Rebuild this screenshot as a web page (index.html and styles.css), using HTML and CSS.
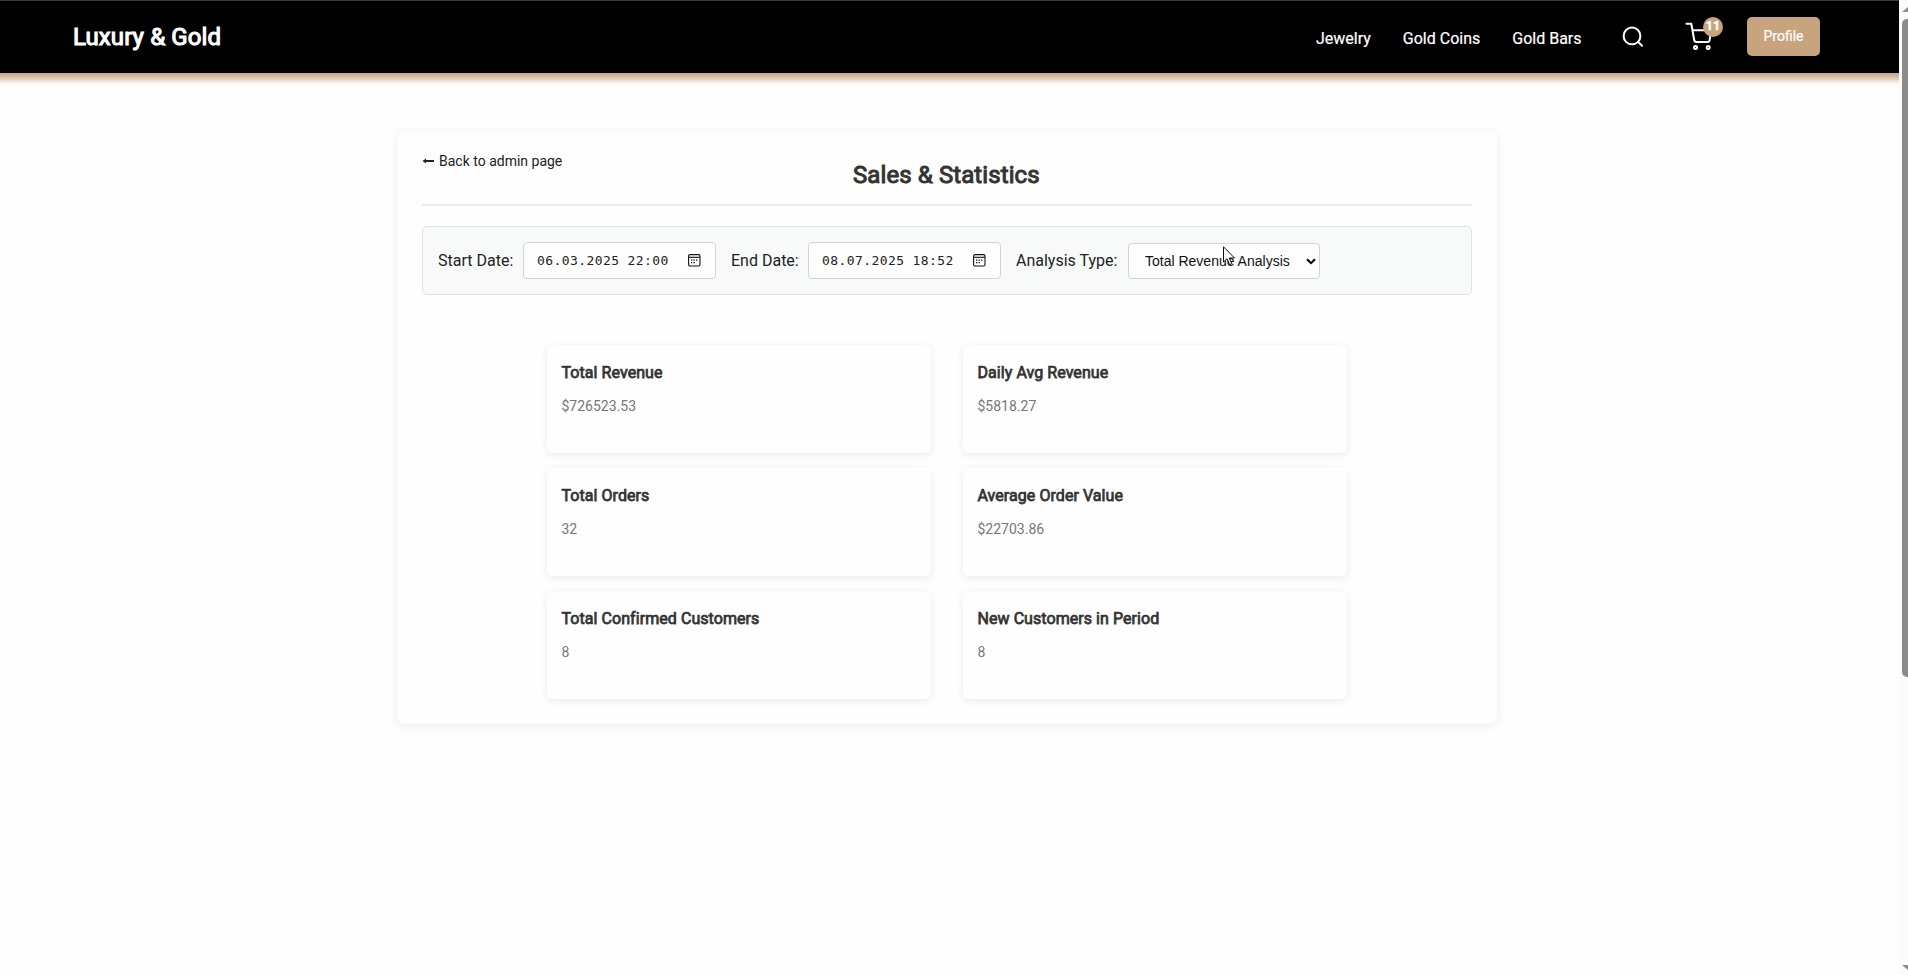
FILE: index.html
```html
<!DOCTYPE html>
<html lang="en">
<head>
<meta charset="utf-8">
<title>Luxury &amp; Gold</title>
<link rel="stylesheet" href="styles.css">
</head>
<body>
<div class="app">
  <div class="page">
    <header class="header">
      <a class="brand"><span>Luxury &amp; Gold</span></a>
      <nav class="nav">
        <a class="nav-link"><span>Jewelry</span></a>
        <a class="nav-link"><span>Gold Coins</span></a>
        <a class="nav-link"><span>Gold Bars</span></a>
      </nav>
      <svg class="search" viewBox="0 0 24 24" width="24" height="24"><circle cx="10" cy="9.900" r="8.400"/><path d="M16.200 16 20 19.700"/></svg>
      <div class="cart">
        <svg viewBox="0 0 30 30" width="30" height="30"><path d="M1.500 1.700h4.800L9.200 18c.2 1.300 1 1.900 2.200 1.900h11c1.200 0 2-.6 2.200-1.700L26 8.300H7.600"/><circle cx="10.500" cy="25.600" r="1.500"/><circle cx="23.200" cy="25.600" r="1.500"/></svg>
        <span class="badge">11</span>
      </div>
      <a class="profile"><span>Profile</span></a>
    </header>
    <main class="panel">
      <div class="panel-head">
        <a class="back"><svg viewBox="0 0 12 8" width="12" height="8"><path d="M.5 4 4 1.500V3h8v2H4v1.500z"/></svg><span>Back to admin page</span></a>
        <h1 class="title"><span>Sales &amp; Statistics</span></h1>
      </div>
      <div class="filters">
        <label class="label label-start">Start Date:</label>
        <div class="date"><span>06.03.2025 22:00</span><svg viewBox="0 0 13 13" width="13" height="13"><rect class="line" x=".6" y=".6" width="11.400" height="11.400" rx="1.400"/><path class="line" d="M1 3.300h11"/><path d="M5.500 5.500h1.300v1.300H5.500zM8 5.500h1.300v1.300H8zM3 8h1.300v1.300H3zM5.500 8h1.300v1.300H5.500zM3 5.500h1.300v1.300H3z"/></svg></div>
        <label class="label label-end">End Date:</label>
        <div class="date"><span>08.07.2025 18:52</span><svg viewBox="0 0 13 13" width="13" height="13"><rect class="line" x=".6" y=".6" width="11.400" height="11.400" rx="1.400"/><path class="line" d="M1 3.300h11"/><path d="M5.500 5.500h1.300v1.300H5.500zM8 5.500h1.300v1.300H8zM3 8h1.300v1.300H3zM5.500 8h1.300v1.300H5.500zM3 5.500h1.300v1.300H3z"/></svg></div>
        <label class="label label-type">Analysis Type:</label>
        <div class="select"><span>Total Revenue Analysis</span><svg viewBox="0 0 10 7" width="10" height="7"><path d="M1 1.200 5 5.200 9 1.200"/></svg></div>
      </div>
      <section class="stats">
        <article class="stat"><h2><span>Total Revenue</span></h2><p><span>$726523.53</span></p></article>
        <article class="stat"><h2><span>Daily Avg Revenue</span></h2><p><span>$5818.27</span></p></article>
        <article class="stat"><h2><span>Total Orders</span></h2><p><span>32</span></p></article>
        <article class="stat"><h2><span>Average Order Value</span></h2><p><span>$22703.86</span></p></article>
        <article class="stat"><h2><span>Total Confirmed Customers</span></h2><p><span>8</span></p></article>
        <article class="stat"><h2><span>New Customers in Period</span></h2><p><span>8</span></p></article>
      </section>
    </main>
  </div>
  <div class="scrollbar"><i class="arrow up"></i><i class="thumb"></i><i class="arrow down"></i></div>
  <svg class="cursor" viewBox="0 0 13 20" width="13" height="20"><path d="M.5.800V16l3.500-3.300 2.600 6 2.300-1-2.600-5.700h5.200z"/></svg>
</div>
</body>
</html>
```
FILE: styles.css
```css
* { box-sizing: border-box; }
body { margin: 0; background: #fefefe; font-family: Roboto, "Liberation Sans", sans-serif; font-size: 16px; color: #222; overflow: hidden; }
h1, h2, p { margin: 0; font-weight: 400; }
.app { position: relative; display: flex; height: 975px; }
.page { width: 1899px; }
.header { display: flex; align-items: flex-start; height: 73px; padding-left: 73px; background: #000; border-top: 1px solid #3b3b3b; box-shadow: 0 -1px 7px 7px #c8a47e; color: #fff; line-height: 20px; }
.brand { width: 1243px; padding-top: 26px; font-size: 24px; letter-spacing: .1px; -webkit-text-stroke: 1.1px #fff; }
.nav { display: flex; gap: 32px; width: 306px; padding-top: 28px; }
.nav-link { white-space: nowrap; -webkit-text-stroke: .2px #fff; }
.search { margin: 25px 0 0; fill: none; stroke: #fff; stroke-width: 2; stroke-linecap: round; }
.cart { position: relative; margin: 21px 0 0 39px; width: 30px; height: 30px; }
.cart svg { display: block; fill: none; stroke: #fff; stroke-width: 2; stroke-linecap: round; stroke-linejoin: round; }
.badge { position: absolute; left: 18px; top: -5px; width: 20px; height: 20px; border-radius: 50%; background: #c8a47e; font-size: 12.500px; font-weight: 700; text-align: center; line-height: 18px; -webkit-text-stroke: .4px #fff; }
.profile { margin: 16px 0 0 32px; width: 73px; height: 39px; border-radius: 5px; background: #c8a47e; font-size: 14px; line-height: 38px; text-align: center; -webkit-text-stroke: .2px #fff; }

.panel { width: 1100px; height: 593px; margin: 58px 0 0 397px; padding: 20px 25px 25px; border-radius: 8px; background: #fefefe; box-shadow: 0 2px 10px rgba(0, 0, 0, .08); }
.panel-head { display: flex; height: 55px; border-bottom: 2px solid #eaeaea; }
.back { display: flex; align-items: center; gap: 5px; width: 431px; height: 20px; font-size: 14px; }
.back svg { fill: #222; }
.title { padding-top: 9px; font-size: 24px; line-height: 30px; letter-spacing: .1px; color: #333; -webkit-text-stroke: 1px #333; white-space: nowrap; }
.filters { display: flex; align-items: center; height: 69px; margin-top: 20px; padding: 0 15px; border: 1px solid #dee2e6; border-radius: 5px; background: #f8faf9; }
.label { color: #222; white-space: nowrap; }
.label-start { width: 85px; }
.label-end { width: 92px; padding-left: 15px; }
.label-type { width: 127px; padding-left: 15px; }
.date { display: flex; align-items: center; justify-content: space-between; width: 193px; height: 37px; padding: 0 14px 0 13px; border: 1px solid #ced4da; border-radius: 4px; background: #fefefe; font: 13px/18px "DejaVu Sans Mono", monospace; letter-spacing: .41px; color: #222; white-space: pre; }
.date svg { fill: #111; }
.date .line { fill: none; stroke: #111; stroke-width: 1.100; }
.select { display: flex; align-items: center; justify-content: space-between; width: 192px; height: 36px; margin-top: 1px; padding: 0 3px 0 16px; border: 1px solid #ced4da; border-radius: 4px; background: #fefefe; font: 14px/18px "Liberation Sans", Arial, sans-serif; color: #111; white-space: nowrap; }
.select svg { fill: none; stroke: #000; stroke-width: 2; }

.stats { display: grid; grid-template-columns: 384px 384px; grid-auto-rows: 108px; gap: 15px 32px; margin: 50px 0 0 125px; }
.stat { padding: 18px 14.500px; border-radius: 6px; background: #fefefe; box-shadow: 0 2px 8px rgba(0, 0, 0, .08); }
.stat h2 { font-size: 16px; line-height: 20px; letter-spacing: .06px; color: #333; -webkit-text-stroke: .75px #333; }
.stat p { margin-top: 14px; font-size: 14px; line-height: 18px; color: #777; }

.scrollbar { position: relative; display: flex; flex-direction: column; width: 9px; height: 975px; padding: 7px 0 5px 3px; background: #fbfbfb; overflow: hidden; }
.arrow { width: 12px; height: 5px; background: #8b8b8b; flex: none; }
.up { clip-path: polygon(50% 0, 100% 100%, 0 100%); }
.down { margin-top: auto; clip-path: polygon(0 0, 100% 0, 50% 100%); }
.thumb { width: 12px; height: 658px; margin-top: 7px; border-radius: 5px; background: #8b8b8b; }
.cursor { position: absolute; left: 1223px; top: 246px; fill: #fff; stroke: #111; stroke-width: 1; }
```
